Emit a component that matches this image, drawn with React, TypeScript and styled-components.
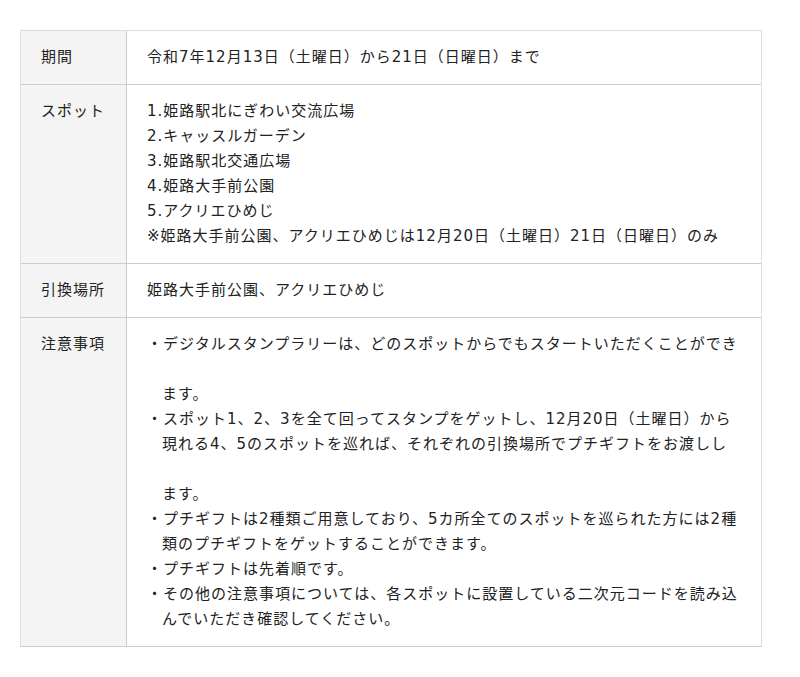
import React from "react";
import styled, { createGlobalStyle } from "styled-components";

const GlobalStyle = createGlobalStyle`
  body {
    margin: 0;
    background: #fff;
  }
`;

const Page = styled.div`
  padding: 30px 38px 30px 20px;
  font-family: "DejaVu Sans", "Noto Sans CJK JP", sans-serif;
  font-size: 15px;
  line-height: 25px;
  letter-spacing: 1px;
  color: #222;
`;

const Table = styled.div`
  display: grid;
  grid-template-columns: 106px 1fr;
  border-top: 1px solid #ddd;
  border-left: 1px solid #ddd;
  border-right: 1px solid #ddd;
`;

const HeadCell = styled.div`
  background: #f4f4f4;
  padding: 14px 20px;
  border-right: 1px solid #ccc;
  border-bottom: 1px solid #ccc;
  white-space: nowrap;
`;

const BodyCell = styled.div`
  padding: 14px 20px;
  border-bottom: 1px solid #ccc;
  white-space: nowrap;
`;

const Notes = styled.ul`
  list-style: none;
  margin: 0;
  padding: 0;
`;

const Note = styled.li`
  padding-left: 1em;
  text-indent: -1em;
`;

const spots = [
  "1.姫路駅北にぎわい交流広場",
  "2.キャッスルガーデン",
  "3.姫路駅北交通広場",
  "4.姫路大手前公園",
  "5.アクリエひめじ",
  "※姫路大手前公園、アクリエひめじは12月20日（土曜日）21日（日曜日）のみ",
];

const notes: string[][] = [
  ["デジタルスタンプラリーは、どのスポットからでもスタートいただくことができ", "", "ます。"],
  [
    "スポット1、2、3を全て回ってスタンプをゲットし、12月20日（土曜日）から",
    "現れる4、5のスポットを巡れば、それぞれの引換場所でプチギフトをお渡しし",
    "",
    "ます。",
  ],
  [
    "プチギフトは2種類ご用意しており、5カ所全てのスポットを巡られた方には2種",
    "類のプチギフトをゲットすることができます。",
  ],
  ["プチギフトは先着順です。"],
  [
    "その他の注意事項については、各スポットに設置している二次元コードを読み込",
    "んでいただき確認してください。",
  ],
];

const App: React.FC = () => {
  return (
    <>
      <GlobalStyle />
      <Page>
        <Table>
          <HeadCell>期間</HeadCell>
          <BodyCell>令和7年12月13日（土曜日）から21日（日曜日）まで</BodyCell>

          <HeadCell>スポット</HeadCell>
          <BodyCell>
            {spots.map((s) => (
              <div key={s}>{s}</div>
            ))}
          </BodyCell>

          <HeadCell>引換場所</HeadCell>
          <BodyCell>姫路大手前公園、アクリエひめじ</BodyCell>

          <HeadCell>注意事項</HeadCell>
          <BodyCell>
            <Notes>
              {notes.map((lines, i) => (
                <Note key={i}>
                  ・
                  {lines.map((line, j) => (
                    <React.Fragment key={j}>
                      {j > 0 && <br />}
                      {line || "\u00a0"}
                    </React.Fragment>
                  ))}
                </Note>
              ))}
            </Notes>
          </BodyCell>
        </Table>
      </Page>
    </>
  );
};

export default App;
